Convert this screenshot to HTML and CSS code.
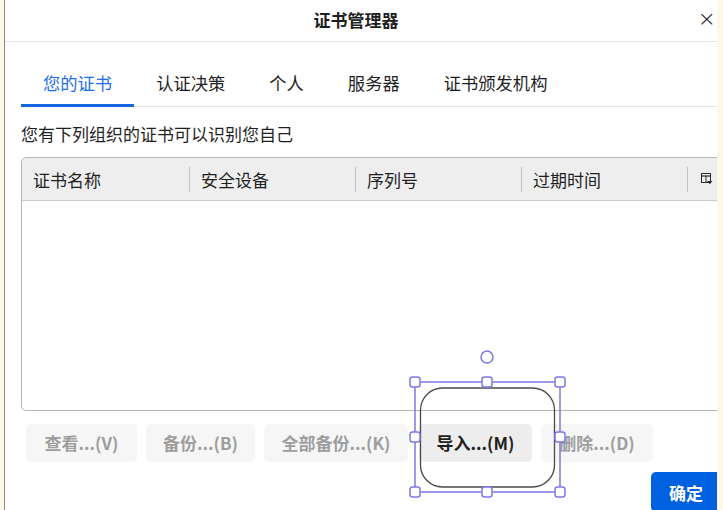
FILE: index.html
```html
<!DOCTYPE html>
<html lang="zh-CN">
<head>
<meta charset="utf-8">
<title>证书管理器</title>
<link rel="stylesheet" href="styles.css">
</head>
<body>
<div class="frame">
  <div class="strip strip-left"></div>
  <div class="dialog">
    <header class="titlebar">
      <h1 class="title">证书管理器</h1>
      <span class="close">×</span>
    </header>
    <nav class="tabs">
      <span class="tab active">您的证书</span>
      <span class="tab">认证决策</span>
      <span class="tab">个人</span>
      <span class="tab">服务器</span>
      <span class="tab">证书颁发机构</span>
    </nav>
    <p class="intro">您有下列组织的证书可以识别您自己</p>
    <div class="table">
      <div class="thead">
        <div class="th">证书名称</div>
        <div class="th">安全设备</div>
        <div class="th">序列号</div>
        <div class="th">过期时间</div>
        <div class="th th-icon">
          <svg width="12" height="12" viewBox="0 0 12 12">
            <rect x="0.5" y="0.5" width="9" height="9" fill="none" stroke="#2a2a2a" stroke-width="1"/>
            <line x1="0.5" y1="3" x2="9.5" y2="3" stroke="#2a2a2a" stroke-width="1.2"/>
            <line x1="5" y1="3" x2="5" y2="9.5" stroke="#2a2a2a" stroke-width="1"/>
            <path d="M6 8 L11.5 8 L8.75 11.2 Z" fill="#2a2a2a"/>
          </svg>
        </div>
      </div>
      <div class="tbody"></div>
    </div>
    <div class="actions">
      <button class="btn" disabled>查看...(V)</button>
      <button class="btn" disabled>备份...(B)</button>
      <button class="btn" disabled>全部备份...(K)</button>
      <button class="btn enabled">导入...(M)</button>
      <button class="btn" disabled>删除...(D)</button>
    </div>
    <div class="footer">
      <button class="primary">确定</button>
    </div>
  </div>
  <div class="strip strip-right"></div>
</div>
<svg class="overlay" width="723" height="510" viewBox="0 0 723 510">
  <rect x="420.5" y="388" width="134" height="99" rx="22" ry="22" fill="none" stroke="#4a4a4a" stroke-width="1.3"/>
  <rect x="415" y="382" width="145" height="110" fill="none" stroke="#7d79e6" stroke-width="1.5"/>
  <circle cx="487" cy="357" r="6" fill="#fff" stroke="#7d79e6" stroke-width="1.5"/>
  <g fill="#fff" stroke="#7d79e6" stroke-width="1.5">
    <rect x="410" y="377" width="10" height="10" rx="2.5"/>
    <rect x="482" y="377" width="10" height="10" rx="2.5"/>
    <rect x="555" y="377" width="10" height="10" rx="2.5"/>
    <rect x="410" y="432" width="10" height="10" rx="2.5"/>
    <rect x="555" y="432" width="10" height="10" rx="2.5"/>
    <rect x="410" y="487" width="10" height="10" rx="2.5"/>
    <rect x="482" y="487" width="10" height="10" rx="2.5"/>
    <rect x="555" y="487" width="10" height="10" rx="2.5"/>
  </g>
</svg>
</body>
</html>
```

FILE: styles.css
```css
* { box-sizing: border-box; }
html, body {
  margin: 0;
  padding: 0;
  width: 723px;
  height: 510px;
  overflow: hidden;
  background: #fff;
  font-family: "Noto Sans CJK SC", "Noto Sans", sans-serif;
  color: #1f1f1f;
}
.frame {
  display: flex;
  width: 723px;
  height: 510px;
  position: relative;
}
.strip { flex: none; background: #fdf9e6; height: 100%; }
.strip-left { width: 4px; }
.strip-right { width: 6px; }
.dialog {
  flex: 1;
  min-width: 0;
  border-left: 1px solid #8a8a8a;
  overflow: hidden;
  display: flex;
  flex-direction: column;
}
.titlebar {
  height: 42px;
  border-bottom: 1px solid #e6e6e6;
  display: flex;
  align-items: center;
  justify-content: center;
  position: relative;
  flex: none;
}
.title {
  margin: 0 0 1px -10px;
  font-size: 17px;
  font-weight: 700;
  line-height: 24px;
}
.close {
  position: absolute;
  right: 1px;
  top: 8px;
  font-size: 22px;
  line-height: 22px;
  font-family: "DejaVu Sans", sans-serif;
  font-weight: 300;
  color: #222;
}
.tabs {
  display: flex;
  margin: 19px 0 0 16px;
  border-bottom: 1px solid #e6e6e6;
  flex: none;
}
.tab {
  padding: 10px 22px 9px;
  font-size: 17.3px;
  line-height: 24px;
  border-bottom: 3px solid transparent;
  margin-bottom: -1px;
}
.tab.active {
  color: #1d6fe6;
  border-bottom-color: #1467e0;
}
.intro {
  margin: 15px 0 0 16px;
  font-size: 17px;
  line-height: 24px;
  flex: none;
}
.table {
  margin: 11px -20px 0 16px;
  height: 254px;
  border: 1px solid #b5b5b5;
  border-radius: 5px;
  display: flex;
  flex-direction: column;
  flex: none;
}
.thead {
  display: flex;
  align-items: center;
  height: 43px;
  background: #eeeeee;
  border-bottom: 1px solid #c9c9c9;
  border-radius: 5px 5px 0 0;
}
.th {
  width: 166px;
  padding-left: 11px;
  font-size: 17px;
  line-height: 25px;
  border-left: 1px solid #c4c4c4;
  height: 25px;
}
.th:first-child { border-left: none; width: 167px; }
.th-icon {
  width: 40px;
  padding-left: 13px;
  display: flex;
  align-items: center;
}
.tbody { flex: 1; }
.actions {
  display: flex;
  gap: 9px;
  margin: 13px 0 0 21px;
  flex: none;
}
.btn {
  height: 38px;
  padding: 0 10px;
  border: none;
  border-radius: 5px;
  background: #f6f6f6;
  color: #9e9e9e;
  font-family: "Noto Sans CJK SC", "Noto Sans", sans-serif;
  font-size: 17px;
  font-weight: 700;
  line-height: 20px;
}
.btn:nth-child(1) { width: 111px; }
.btn:nth-child(2) { width: 109px; }
.btn:nth-child(3) { width: 144px; }
.btn:nth-child(4) { width: 113px; margin-left: 2px; }
.btn:nth-child(5) { width: 112px; }
.btn.enabled {
  background: #ededed;
  color: #1f1f1f;
}
.footer {
  display: flex;
  justify-content: flex-end;
  margin: 10px -19px 0 0;
  flex: none;
}
.primary {
  width: 85px;
  height: 40px;
  padding: 0 0 0 18px;
  text-align: left;
  border: none;
  border-radius: 5px;
  background: #0061e0;
  color: #fff;
  font-family: "Noto Sans CJK SC", "Noto Sans", sans-serif;
  font-size: 17px;
  font-weight: 700;
}
.overlay {
  position: absolute;
  left: 0;
  top: 0;
  pointer-events: none;
}
```
